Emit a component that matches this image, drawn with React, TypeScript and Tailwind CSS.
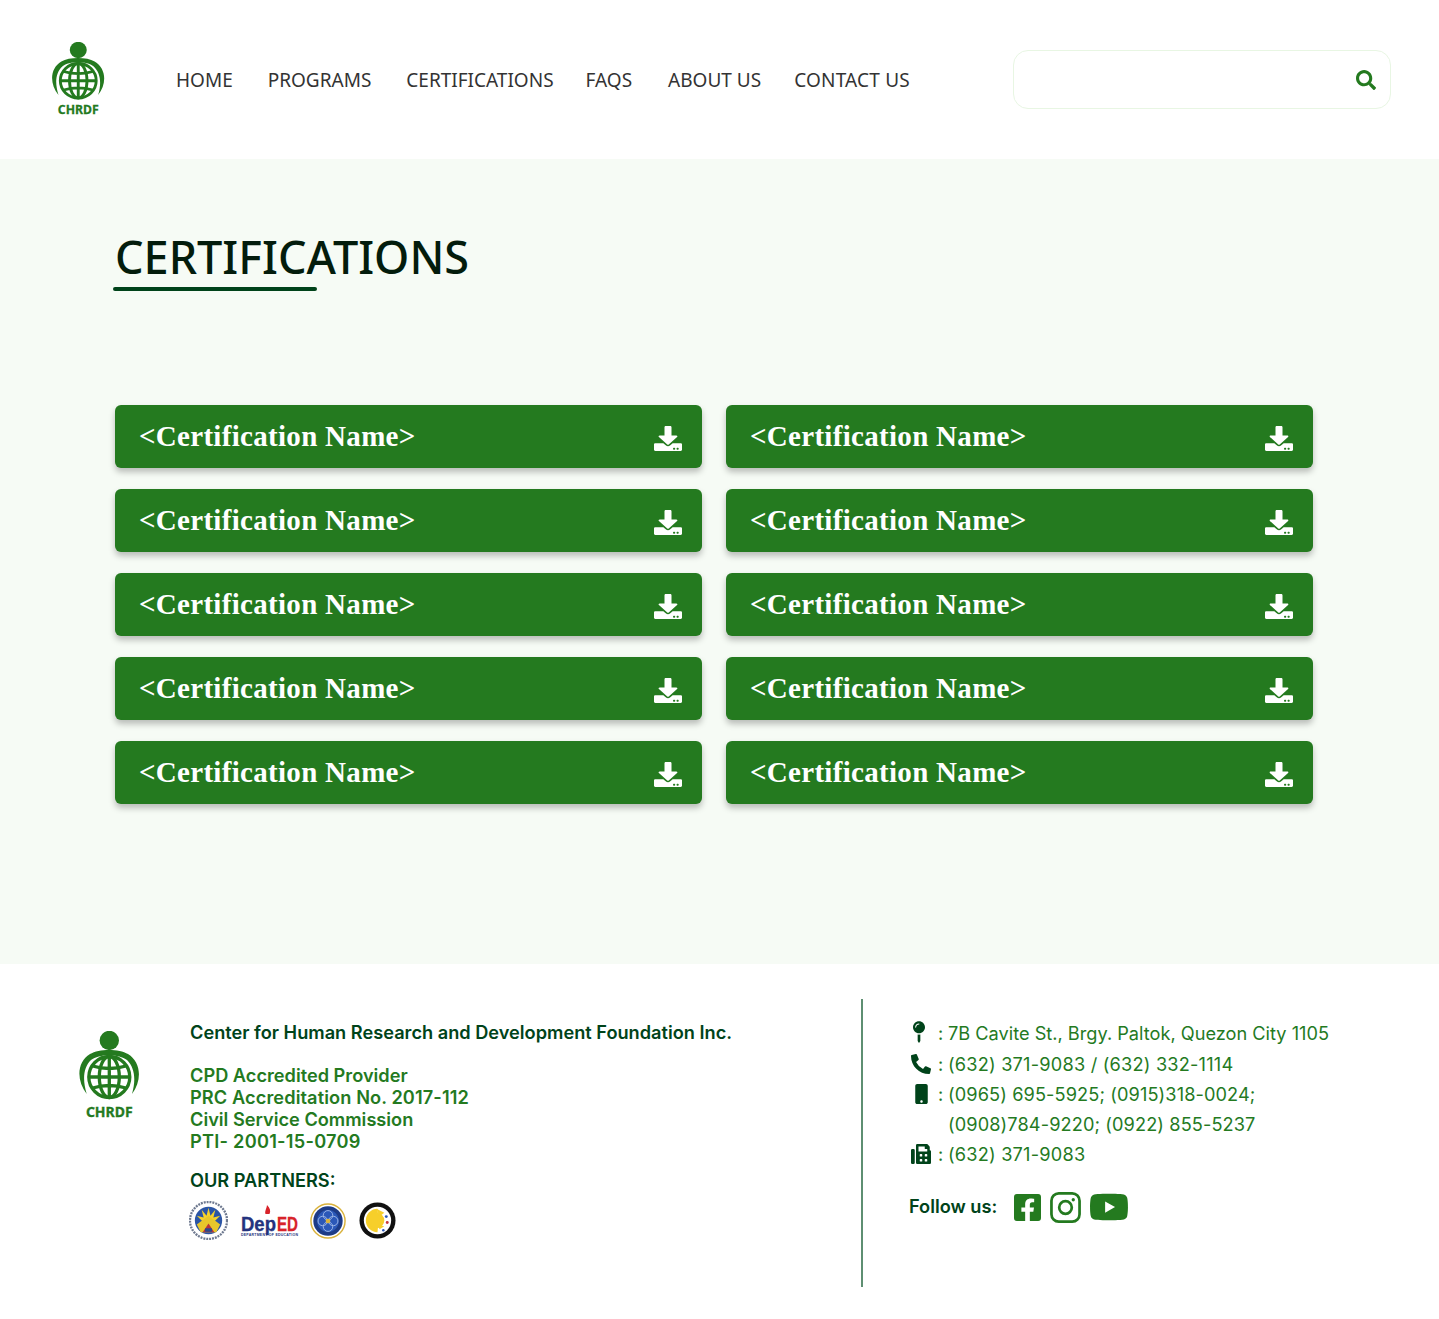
import React from 'react';
import { FaDownload, FaSearch, FaMapPin, FaPhoneAlt, FaMobile, FaFax, FaFacebookSquare, FaYoutube } from 'react-icons/fa';

const navLinks = [
  { label: 'HOME', cls: 'ml-[70px]' },
  { label: 'PROGRAMS', cls: 'ml-[35px]' },
  { label: 'CERTIFICATIONS', cls: 'ml-[35px]' },
  { label: 'FAQS', cls: 'ml-[32px]' },
  { label: 'ABOUT US', cls: 'ml-[36px]' },
  { label: 'CONTACT US', cls: 'ml-[33px] tracking-[0.2px]' },
];

const certs = Array.from({ length: 10 }, (_, i) => i);

function Logo({ className }: { className?: string }) {
  return (
    <svg viewBox="0 0 64 89" preserveAspectRatio="none" className={className}>
      <circle cx="32.300" cy="9.500" r="9.700" fill="#247a1f" />
      <path d="M9.700 63C-1 49 0 31 13 23C22 17.500 42 17.500 51 23C64 31 65.500 49 55 63C59 49 58 37 50 29C42 22.500 22 22.500 14 29C6 37 5.500 49 9.700 63Z" fill="#247a1f" />
      <g fill="none" stroke="#247a1f" strokeWidth="3.300">
        <circle cx="32.300" cy="46" r="20.500" />
        <ellipse cx="32.300" cy="46" rx="10" ry="20.500" />
        <path d="M32.300 25.500V66.500M12 46H52.500M15.500 35Q32.300 40 49 35M15.500 57Q32.300 52 49 57" />
      </g>
      <text x="32.300" y="85.500" textAnchor="middle" fill="#247a1f" stroke="#247a1f" strokeWidth="0.300" fontSize="14" fontWeight="700" fontFamily="'Noto Sans', sans-serif">CHRDF</text>
    </svg>
  );
}

function SealOne() {
  return (
    <svg viewBox="0 0 40 40" className="w-[39px] h-[39px]">
      <circle cx="20" cy="20" r="19" fill="#fff" stroke="#6f7a90" strokeWidth="2.400" strokeDasharray="2 1" />
      <circle cx="20" cy="20" r="14" fill="#2b55a5" />
      <path d="M20 7L22 15L27 9L25 17L32 15L26 21L14 21L8 15L15 17L13 9L18 15Z" fill="#f6d22a" />
      <path d="M8 24L20 15L32 24L28 32H12Z" fill="#e7c72b" />
      <path d="M14 32L20 23L26 32Z" fill="#b8343a" />
      <rect x="16.500" y="28" width="7" height="3.500" fill="#274a8f" />
    </svg>
  );
}

function SealThree() {
  return (
    <svg viewBox="0 0 38 38" className="w-[36px] h-[36px]">
      <circle cx="19" cy="19" r="18" fill="#fff" stroke="#d9b23c" strokeWidth="1.500" />
      <circle cx="19" cy="19" r="15.500" fill="#1d3b86" />
      <circle cx="19" cy="19" r="11.500" fill="#2b58b8" />
      <g fill="none" stroke="#9fb8e8" strokeWidth="1">
        <circle cx="19" cy="13" r="5" />
        <circle cx="19" cy="25" r="5" />
        <circle cx="13.500" cy="19" r="5" />
        <circle cx="24.500" cy="19" r="5" />
      </g>
      <circle cx="19" cy="19" r="2.500" fill="#d9b23c" />
    </svg>
  );
}

function SealFour() {
  return (
    <svg viewBox="0 0 38 38" className="w-[37px] h-[37px]">
      <circle cx="19" cy="19" r="18.500" fill="#111" />
      <circle cx="19" cy="19" r="14" fill="#fff" />
      <path d="M19 7A12 12 0 1 0 19 31C20 24 20 14 19 7Z" fill="#f7cf2a" />
      <circle cx="18" cy="19" r="8" fill="#f7cf2a" />
      <path d="M18 7L26 11L21 15Z" fill="#f7cf2a" />
      <path d="M20 24L26 25L21 28Z" fill="#f7cf2a" />
      <circle cx="28" cy="15" r="1.500" fill="#2b58b8" />
      <circle cx="29" cy="21" r="1.500" fill="#c8373c" />
      <circle cx="25" cy="29" r="1.300" fill="#2b58b8" />
    </svg>
  );
}

function DepEd() {
  return (
    <svg viewBox="0 0 60 34" className="w-[60px] h-[34px] overflow-visible">
      <path d="M27 1C30 4 31 7 29.500 10H25.500C24.500 7 26.500 5 27 1Z" fill="#d8232a" />
      <text x="1" y="27" fontSize="20" fontWeight="700" fill="#24337e" stroke="#24337e" strokeWidth="0.300" fontFamily="'Liberation Sans', sans-serif" textLength="35" lengthAdjust="spacingAndGlyphs">Dep</text>
      <text x="37" y="27" fontSize="20" fontWeight="700" fill="#d8232a" stroke="#d8232a" strokeWidth="0.300" fontFamily="'Liberation Sans', sans-serif" textLength="21" lengthAdjust="spacingAndGlyphs">ED</text>
      <text x="1" y="32" fontSize="3.500" fontWeight="700" fill="#24337e" fontFamily="'Liberation Sans', sans-serif" textLength="57" lengthAdjust="spacing">DEPARTMENT OF EDUCATION</text>
    </svg>
  );
}

function Instagram() {
  return (
    <svg viewBox="0 0 32 32" className="w-[31px] h-[31px]" fill="none" stroke="#247a1f">
      <rect x="1.500" y="1.500" width="29" height="29" rx="7.500" strokeWidth="2.800" />
      <circle cx="16" cy="16" r="6.500" strokeWidth="2.800" />
      <circle cx="24" cy="8" r="1.700" fill="#247a1f" stroke="none" />
    </svg>
  );
}

export default function App() {
  return (
    <div className="w-[1439px] min-h-[1319px] bg-white font-['Inter',sans-serif]">
      {/* Header */}
      <header className="h-[159px] flex items-center pl-[50px] pr-[48px]">
        <Logo className="w-[56px] h-[75px] shrink-0 -mt-[1px]" />
        <nav className="flex items-center font-['Noto_Sans',sans-serif] text-[19px] leading-[28px] text-[#333333]">
          {navLinks.map((link) => (
            <a key={link.label} href="#" className={link.cls}>{link.label}</a>
          ))}
        </nav>
        <div className="ml-auto w-[378px] h-[59px] flex items-center justify-end pr-[14px] rounded-[15px] border border-[#e8f6e3] bg-white">
          <FaSearch className="w-[20px] h-[20px] text-[#247a1f]" />
        </div>
      </header>

      {/* Main */}
      <main className="h-[805px] bg-[#f6fbf5] pl-[115px] pr-[126px] pt-[70px]">
        <h1 className="font-['Noto_Sans',sans-serif] font-medium text-[45px] leading-[56px] text-[#031c0c]">CERTIFICATIONS</h1>
        <div className="w-[204px] h-[4px] -ml-[2px] mt-[2px] rounded-full bg-[#00431a]" />
        <div className="grid grid-cols-2 gap-x-[24px] gap-y-[21px] mt-[114px]">
          {certs.map((i) => (
            <a key={i} href="#" className="h-[63px] flex items-center justify-between pl-[24px] pr-[20px] rounded-[6px] bg-[#247a1f] shadow-[0_4px_6px_rgba(0,0,0,0.25)]">
              <span className="font-['Liberation_Serif',serif] font-bold text-[29px] leading-[34px] tracking-[0.3px] -mt-[2px] text-white">&lt;Certification Name&gt;</span>
              <FaDownload className="w-[28px] h-[25px] mt-[4px] text-white" preserveAspectRatio="none" />
            </a>
          ))}
        </div>
      </main>

      {/* Footer */}
      <footer className="flex h-[355px] pl-[77px] pt-[35px]">
        <Logo className="w-[64px] h-[89px] shrink-0 mt-[32px]" />
        <div className="ml-[49px] w-[671px] pt-[22px] text-[18.200px] leading-[22px] font-semibold text-[#247a1f]">
          <p className="text-[#00431a]">Center for Human Research and Development Foundation Inc.</p>
          <div className="mt-[21px]">
            <p>CPD Accredited Provider</p>
            <p className="tracking-[0.1px]">PRC Accreditation No. 2017-112</p>
            <p>Civil Service Commission</p>
            <p className="tracking-[0.25px]">PTI- 2001-15-0709</p>
          </div>
          <p className="mt-[17px] text-[#00431a]">OUR PARTNERS:</p>
          <div className="flex items-center mt-[10px] -ml-[1px]">
            <SealOne />
            <div className="ml-[12px]"><DepEd /></div>
            <div className="ml-[10px]"><SealThree /></div>
            <div className="ml-[13px]"><SealFour /></div>
          </div>
        </div>
        <div className="w-[2px] h-[288px] bg-[#5e8f72]" />
        <div className="ml-[46px] pt-[19px] text-[18.200px] leading-[30px] text-[#247a1f]">
          <div className="flex">
            <span className="w-[29px] h-[30px] flex items-center justify-start pl-[4px]"><FaMapPin className="w-[12px] h-[22px] text-[#00431a] -mt-[3px]" /></span>
            <span className="w-[10px]">:</span>
            <span>7B Cavite St., Brgy. Paltok, Quezon City 1105</span>
          </div>
          <div className="flex mt-[1px]">
            <span className="w-[29px] h-[30px] flex items-center justify-start pl-[2px]"><FaPhoneAlt className="w-[20px] h-[20px] text-[#00431a]" /></span>
            <span className="w-[10px]">:</span>
            <span className="tracking-[0.2px]">(632) 371-9083 / (632) 332-1114</span>
          </div>
          <div className="flex">
            <span className="w-[29px] h-[30px] flex items-center justify-start pl-[6px]"><FaMobile className="w-[13px] h-[20px] text-[#00431a]" /></span>
            <span className="w-[10px]">:</span>
            <span className="tracking-[0.1px]">(0965) 695-5925; (0915)318-0024;<br />(0908)784-9220; (0922) 855-5237</span>
          </div>
          <div className="flex">
            <span className="w-[29px] h-[30px] flex items-center justify-start pl-[2px]"><FaFax className="w-[20px] h-[20px] text-[#00431a]" /></span>
            <span className="w-[10px]">:</span>
            <span className="tracking-[0.2px]">(632) 371-9083</span>
          </div>
          <div className="flex items-center mt-[18px]">
            <span className="font-semibold text-[#00431a]">Follow us:</span>
            <FaFacebookSquare className="ml-[17px] mt-[2px] w-[27px] h-[31px] text-[#247a1f]" />
            <div className="ml-[9px] mt-[2px]"><Instagram /></div>
            <FaYoutube className="ml-[8px] mt-[2px] w-[40px] h-[36px] text-[#247a1f]" />
          </div>
        </div>
      </footer>
    </div>
  );
}
